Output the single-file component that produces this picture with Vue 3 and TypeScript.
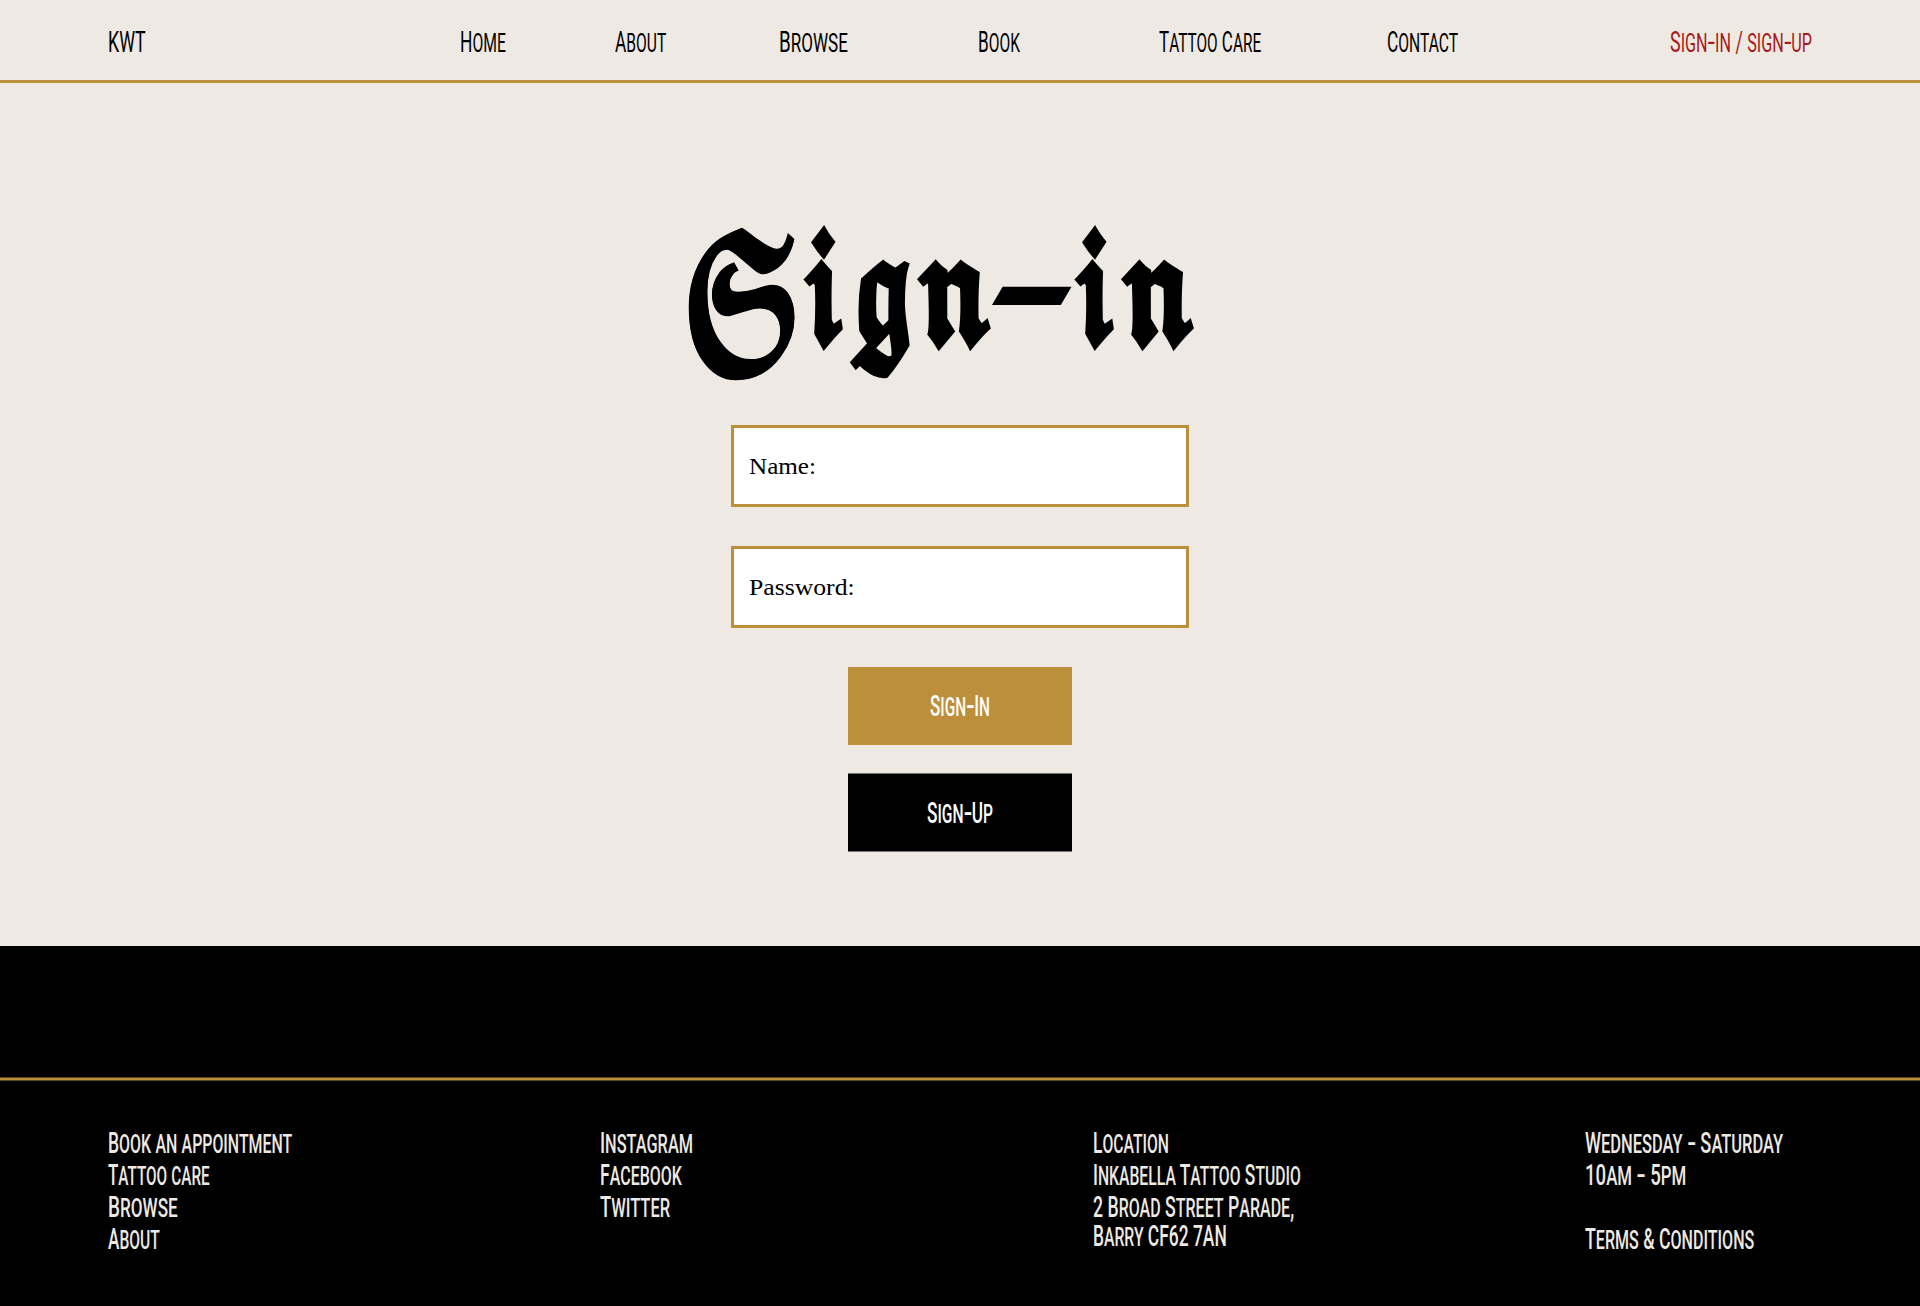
<script setup lang="ts">
interface Label {
  text: string
  width: number
}
interface Token {
  text: string
  kind: 'cap' | 'small' | 'dash'
}

// Squeezes a text run horizontally so that it fills the given width.
const vFit = {
  mounted(el: HTMLElement, binding: { value: number }) {
    el.style.transform = `scaleX(${binding.value / el.offsetWidth})`
  },
}

function tokens(text: string): Token[] {
  const parts = text.match(/[a-z]+|-|[^a-z-]+/g) ?? []
  return parts.map((part) => ({
    text: part,
    kind: part === '-' ? 'dash' : /^[a-z]/.test(part) ? 'small' : 'cap',
  }))
}

const nav: Label[] = [
  { text: 'KWT', width: 38 },
  { text: 'Home', width: 46 },
  { text: 'About', width: 51 },
  { text: 'Browse', width: 69 },
  { text: 'Book', width: 42 },
  { text: 'Tattoo Care', width: 102 },
  { text: 'Contact', width: 71 },
  { text: 'Sign-in / sign-up', width: 142 },
]

const titleLetters = [
  { text: '𝕾', width: 119, kind: 'initial' },
  { text: '𝖎', width: 46, kind: 'letter' },
  { text: '𝖌', width: 67, kind: 'letter' },
  { text: '𝖓', width: 81, kind: 'letter' },
  { text: '-', width: 77, kind: 'hyphen' },
  { text: '𝖎', width: 46, kind: 'letter' },
  { text: '𝖓', width: 80, kind: 'letter' },
]

const fields = [
  { text: 'Name:', width: 67 },
  { text: 'Password:', width: 106 },
]

const buttons = [
  { text: 'Sign-In', width: 60, tone: 'gold' },
  { text: 'Sign-Up', width: 66, tone: 'black' },
]

const columns: Label[][] = [
  [
    { text: 'Book an appointment', width: 184 },
    { text: 'Tattoo care', width: 102 },
    { text: 'Browse', width: 70 },
    { text: 'About', width: 52 },
  ],
  [
    { text: 'Instagram', width: 93 },
    { text: 'Facebook', width: 82 },
    { text: 'Twitter', width: 70 },
  ],
  [
    { text: 'Location', width: 76 },
    { text: 'Inkabella Tattoo Studio', width: 208 },
    { text: '2 Broad Street Parade,', width: 201 },
    { text: 'Barry CF62 7AN', width: 134 },
  ],
  [
    { text: 'Wednesday - Saturday', width: 198 },
    { text: '10am - 5pm', width: 101 },
    { text: '', width: 0 },
    { text: 'Terms & Conditions', width: 169 },
  ],
]
</script>

<template>
  <div class="page">
    <header class="nav">
      <a v-for="item in nav" :key="item.text" class="label" :style="{ width: item.width + 'px' }">
        <span v-fit="item.width" class="run"><span v-for="(t, i) in tokens(item.text)" :key="i" :class="t.kind">{{ t.text }}</span></span>
      </a>
    </header>

    <main class="main">
      <h1 class="title" aria-label="Sign-in">
        <span v-for="(l, i) in titleLetters" :key="i" class="cell" :style="{ width: l.width + 'px' }"><span v-fit="l.width" class="run" :class="l.kind"><span class="glyph">{{ l.text }}</span></span></span>
      </h1>
      <form class="form" @submit.prevent>
        <label v-for="f in fields" :key="f.text" class="field">
          <span v-fit="f.width" class="run">{{ f.text }}</span>
        </label>
        <button v-for="b in buttons" :key="b.text" type="button" class="button" :class="b.tone">
          <span class="label" :style="{ width: b.width + 'px' }">
            <span v-fit="b.width" class="run"><span v-for="(t, i) in tokens(b.text)" :key="i" :class="t.kind">{{ t.text }}</span></span>
          </span>
        </button>
      </form>
    </main>

    <footer class="footer">
      <div class="rule"></div>
      <div class="columns">
        <div v-for="(col, c) in columns" :key="c" class="column">
          <div v-for="(item, r) in col" :key="r" class="label">
            <span v-if="item.text" v-fit="item.width" class="run"><span v-for="(t, i) in tokens(item.text)" :key="i" :class="t.kind">{{ t.text }}</span></span>
          </div>
        </div>
      </div>
    </footer>
  </div>
</template>

<style>
body {
  margin: 0;
  background: #eee9e3;
}
</style>

<style scoped>
.page {
  width: 1920px;
  height: 1306px;
  display: flex;
  flex-direction: column;
  overflow: hidden;
  background: #eee9e3;
  color: #000;
  font-family: Roboto, "Liberation Sans", sans-serif;
}
.run {
  display: inline-block;
  white-space: pre;
  transform-origin: 0 50%;
}
.label {
  display: block;
  height: 32px;
  line-height: 32px;
  font-size: 29.5px;
  text-align: left;
}
.label .run {
  line-height: 26px;
}
.small {
  font-size: 0.905em;
  line-height: 0;
  text-transform: uppercase;
}
.dash {
  display: inline-block;
  line-height: 0;
  transform: scaleX(1.45);
  margin: 0 2px;
}
.nav {
  box-sizing: border-box;
  height: 83px;
  flex: none;
  padding: 26px 0 0 108px;
  border-bottom: 3px solid #bd8f3b;
  display: grid;
  grid-template-columns: 352px 155px 164px 199px 181px 228px 283px 143px;
}
.nav .label:last-child {
  color: #a81818;
}
.main {
  height: 863px;
  flex: none;
  display: flex;
  flex-direction: column;
  align-items: center;
}
.title {
  width: 516px;
  height: 200px;
  margin: 106px 40px 36px 0;
  display: flex;
  font: 700 180px/200px "DejaVu Math TeX Gyre", "DejaVu Serif", serif;
}
.cell {
  flex: none;
  height: 200px;
}
.letter,
.hyphen {
  font-size: 142px;
  line-height: 100px;
  -webkit-text-stroke: 4px #000;
}
.letter {
  translate: 0 -1px;
}
.initial {
  line-height: 150px;
  translate: 0 29px;
  -webkit-text-stroke: 1px #000;
}
.hyphen {
  translate: 0 -8px;
  -webkit-text-stroke-width: 3px;
}
.glyph {
  display: inline-block;
}
.hyphen .glyph {
  transform: skewX(-20deg);
}
.form {
  display: flex;
  flex-direction: column;
  align-items: center;
}
.field {
  box-sizing: border-box;
  width: 458px;
  height: 82px;
  margin-bottom: 39px;
  padding-left: 15px;
  border: 3px solid #bd8f3b;
  background: #fff;
  font: 24px/76px "Liberation Serif", serif;
}
.button {
  box-sizing: border-box;
  width: 224px;
  height: 78px;
  padding: 0;
  border: 0;
  display: flex;
  align-items: center;
  justify-content: center;
  color: #fff;
  font-family: inherit;
}
.button .label {
  font-weight: 500;
}
.gold {
  background: #bd8f3b;
}
.black {
  height: 79px;
  margin-top: 28px;
  background: #000;
  border: solid #77746f;
  border-width: 1px 0;
}
.footer {
  display: flow-root;
  height: 360px;
  background: #000;
  color: #eee9e3;
}
.rule {
  height: 2px;
  margin-top: 131px;
  background: #bd8f3b;
  border: solid #5f481e;
  border-width: 1px 0;
}
.columns {
  display: grid;
  grid-template-columns: 492px 493px 492px 220px;
  padding: 46px 0 0 107.5px;
}
.columns .label {
  font-weight: 500;
}
.column:nth-child(3) .label:last-child {
  margin-top: -3px;
}
</style>
